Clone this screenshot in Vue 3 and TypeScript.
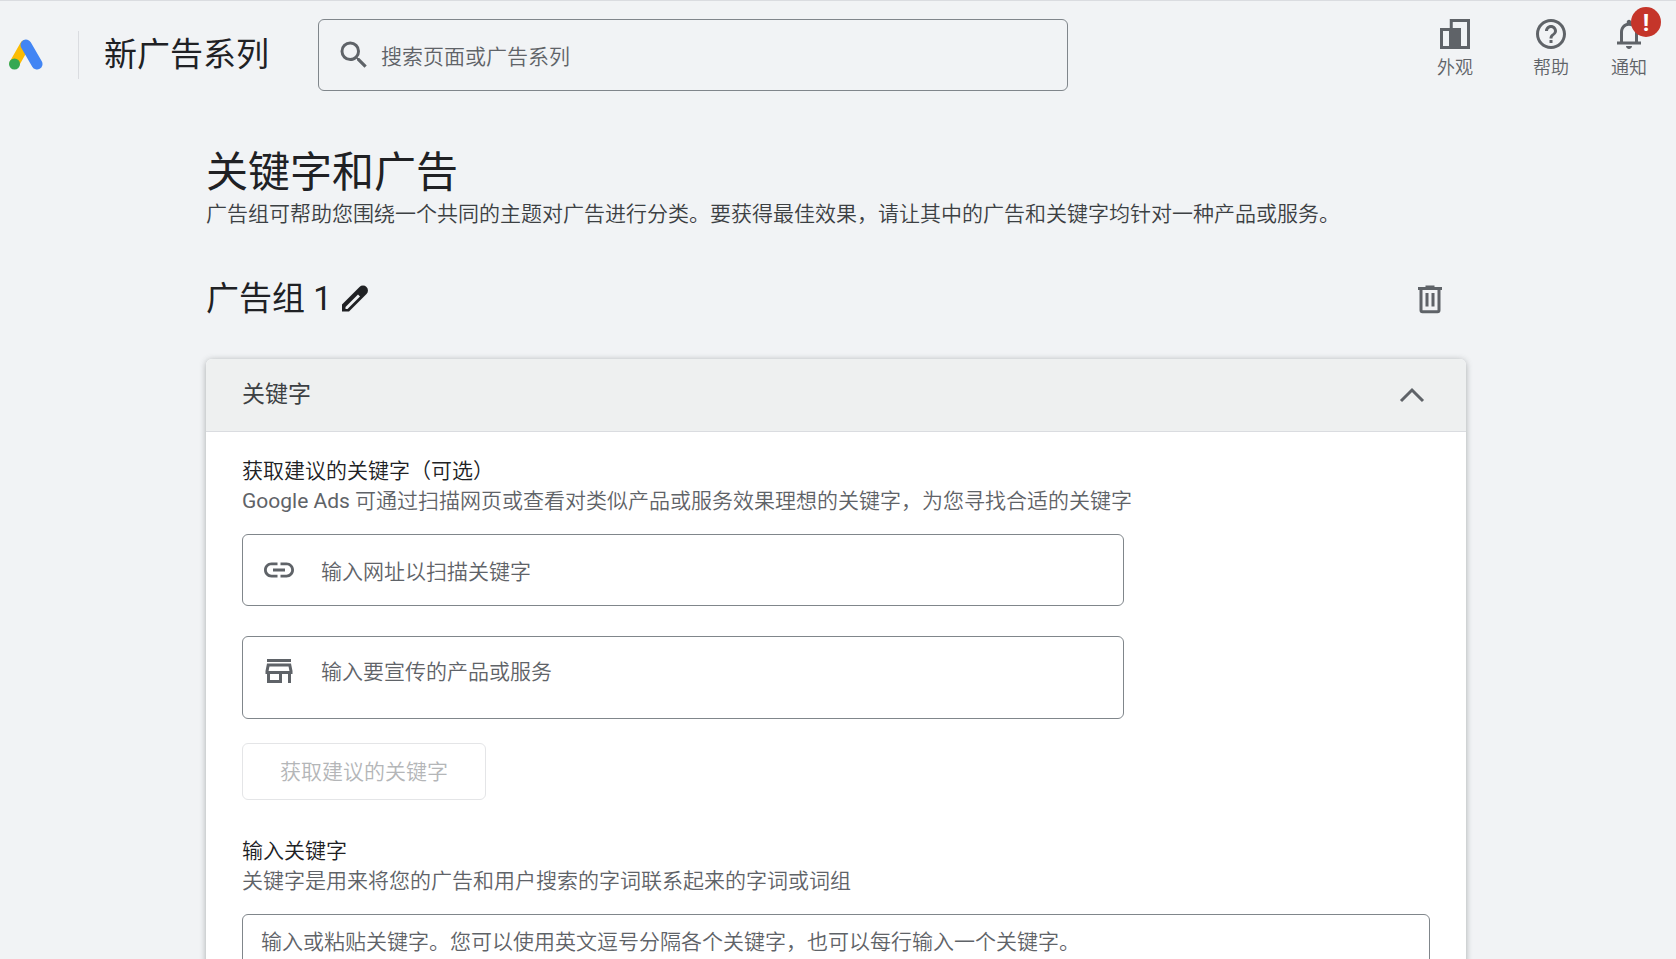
<script setup lang="ts">
import { ref } from 'vue'

const query = ref('')
const siteUrl = ref('')
const product = ref('')
const keywords = ref('')
</script>

<template>
  <div class="page">
    <header class="topbar">
      <a class="logo" href="#" aria-label="Google Ads">
        <svg viewBox="0 0 36 32" width="36" height="32" aria-hidden="true">
          <path d="M17 6 6.500 24.500" stroke="#fbbc04" stroke-width="10" stroke-linecap="round" />
          <path d="M18 6 29 25" stroke="#4285f4" stroke-width="11" stroke-linecap="round" />
          <circle cx="6.500" cy="25" r="5.500" fill="#34a853" />
        </svg>
      </a>
      <div class="product-name">新广告系列</div>
      <label class="search">
        <svg class="icon" viewBox="0 0 24 24" aria-hidden="true">
          <path d="M15.5 14h-.79l-.28-.27A6.47 6.47 0 0 0 16 9.5 6.5 6.5 0 1 0 9.5 16c1.61 0 3.09-.59 4.23-1.57l.27.28v.79l5 4.99L20.49 19l-4.99-5zm-6 0C7.01 14 5 11.99 5 9.5S7.01 5 9.5 5 14 7.01 14 9.5 11.99 14 9.5 14z" />
        </svg>
        <input v-model="query" type="text" placeholder="搜索页面或广告系列" aria-label="搜索页面或广告系列" />
      </label>
      <nav class="tools">
        <button type="button" class="tool appearance">
          <svg class="icon" viewBox="0 0 24 24" aria-hidden="true">
            <path fill-rule="evenodd" d="M8.500 2H22v20H2V8h6.500zM10.500 4v4H16v12h4V4zM4 10v10h4V10z" />
          </svg>
          <span>外观</span>
        </button>
        <button type="button" class="tool">
          <svg class="icon" viewBox="0 0 24 24" aria-hidden="true">
            <path d="M11 18h2v-2h-2v2zm1-16C6.480 2 2 6.480 2 12s4.480 10 10 10 10-4.480 10-10S17.520 2 12 2zm0 18c-4.410 0-8-3.590-8-8s3.590-8 8-8 8 3.590 8 8-3.590 8-8 8zm0-14c-2.210 0-4 1.790-4 4h2c0-1.100.9-2 2-2s2 .9 2 2c0 2-3 1.750-3 5h2c0-2.250 3-2.500 3-5 0-2.210-1.790-4-4-4z" />
          </svg>
          <span>帮助</span>
        </button>
        <button type="button" class="tool">
          <svg class="icon" viewBox="0 0 24 24" aria-hidden="true">
            <path d="M12 22c1.100 0 2-.9 2-2h-4c0 1.100.9 2 2 2zm6-5v-6c0-3.070-1.630-5.640-4.500-6.320V4c0-.83-.67-1.500-1.500-1.500s-1.500.67-1.500 1.500v.68C7.640 5.360 6 7.920 6 11v6H4v2h16v-2h-2zm-2 0H8v-6c0-2.480 1.510-4.500 4-4.500s4 2.020 4 4.500v6z" />
          </svg>
          <span>通知</span>
          <b class="badge">!</b>
        </button>
      </nav>
    </header>

    <main class="content">
      <div class="column">
        <h1>关键字和广告</h1>
        <p class="intro">广告组可帮助您围绕一个共同的主题对广告进行分类。要获得最佳效果，请让其中的广告和关键字均针对一种产品或服务。</p>

        <div class="group">
          <h2>广告组 1</h2>
          <button type="button" class="plain dark" aria-label="修改广告组名称">
            <svg class="icon" viewBox="0 0 36 36" aria-hidden="true">
              <path d="M6 23.500 23.500 6a4.800 4.800 0 0 1 7 7L13 30.500H6z" />
              <path d="M9.500 26 22 13.500l2 2L11.500 28h-2z" fill="#f1f3f5" />
            </svg>
          </button>
          <button type="button" class="plain remove" aria-label="移除广告组">
            <svg class="icon" viewBox="0 0 24 24" aria-hidden="true">
              <path fill-rule="evenodd" d="M9 3h6v1h5v2h-1v13.500a2 2 0 0 1-2 2H7a2 2 0 0 1-2-2V6H4V4h5zM7 6v13.500h10V6zM9 8h2v9H9zM13 8h2v9h-2z" />
            </svg>
          </button>
        </div>

        <section class="card">
          <div class="card-head">
            <h3>关键字</h3>
            <button type="button" class="plain" aria-label="收起">
              <svg class="icon" viewBox="0 0 36 36" aria-hidden="true">
                <path d="M7 24 18 13l11 11" fill="none" stroke="currentColor" stroke-width="3" />
              </svg>
            </button>
          </div>
          <div class="card-body">
            <h4>获取建议的关键字（可选）</h4>
            <p><span class="brand">Google Ads</span> 可通过扫描网页或查看对类似产品或服务效果理想的关键字，为您寻找合适的关键字</p>
            <label class="field">
              <svg class="icon" viewBox="0 0 24 24" aria-hidden="true">
                <path d="M3.900 12c0-1.710 1.390-3.100 3.100-3.100h4V7H7c-2.760 0-5 2.240-5 5s2.240 5 5 5h4v-1.900H7c-1.710 0-3.100-1.390-3.100-3.100zM8 13h8v-2H8v2zm9-6h-4v1.900h4c1.710 0 3.100 1.390 3.100 3.100s-1.390 3.100-3.100 3.100h-4V17h4c2.760 0 5-2.240 5-5s-2.240-5-5-5z" />
              </svg>
              <input v-model="siteUrl" type="text" placeholder="输入网址以扫描关键字" aria-label="输入网址以扫描关键字" />
            </label>
            <label class="field tall">
              <svg class="icon" viewBox="0 0 24 24" aria-hidden="true">
                <path d="M18.360 9l.6 3H5.040l.6-3h12.720M20 4H4v2h16V4zm0 3H4l-1 5v2h1v6h10v-6h4v6h2v-6h1v-2l-1-5zM6 18v-4h6v4H6z" />
              </svg>
              <input v-model="product" type="text" placeholder="输入要宣传的产品或服务" aria-label="输入要宣传的产品或服务" />
            </label>
            <button type="button" class="suggest" disabled>获取建议的关键字</button>

            <h4><label for="keywords">输入关键字</label></h4>
            <p>关键字是用来将您的广告和用户搜索的字词联系起来的字词或词组</p>
            <textarea id="keywords" v-model="keywords" rows="8" placeholder="输入或粘贴关键字。您可以使用英文逗号分隔各个关键字，也可以每行输入一个关键字。"></textarea>
          </div>
        </section>
      </div>
    </main>
  </div>
</template>

<style>
body {
  margin: 0;
  background: #f1f3f5;
}
</style>

<style scoped>
.page {
  display: flex;
  flex-direction: column;
  height: 100vh;
  box-sizing: border-box;
  overflow: hidden;
  border-top: 1px solid #dadce0;
  background: #f1f3f5;
  color: #202124;
  font: 350 21px/30px Roboto, "Noto Sans CJK SC", sans-serif;
}

h1, h2, h3, h4, p {
  margin: 0;
  font-weight: inherit;
}

button, input, textarea {
  font: inherit;
  color: inherit;
}

.icon {
  display: block;
  flex: none;
  width: 36px;
  height: 36px;
  fill: currentColor;
}

.topbar {
  display: flex;
  flex: none;
  align-items: center;
  height: 108px;
  padding: 0 29px 0 8px;
}

.logo {
  display: flex;
  align-items: center;
  height: 48px;
  padding-right: 34px;
  border-right: 1px solid #dadce0;
}

.logo path {
  fill: none;
}

.product-name {
  width: 214px;
  padding-left: 25px;
  font-size: 33px;
  font-weight: 400;
  line-height: 50px;
  white-space: nowrap;
}

.search {
  display: flex;
  align-items: center;
  gap: 9px;
  box-sizing: border-box;
  flex: 0 1 750px;
  height: 72px;
  padding: 0 17px;
  border: 1px solid #80868b;
  border-radius: 6px;
  color: #5f6368;
}

input {
  flex: 1;
  min-width: 0;
  padding: 4px 0 0;
  border: 0;
  outline: 0;
  background: none;
}

::placeholder {
  color: #5f6368;
  opacity: 1;
}

.tools {
  display: flex;
  gap: 42px;
  margin-left: auto;
  padding-bottom: 10px;
}

.tool {
  position: relative;
  display: flex;
  flex-direction: column;
  align-items: center;
  padding: 0;
  border: 0;
  background: none;
  color: #5f6368;
  font-size: 18px;
  line-height: 32px;
}

.appearance {
  margin-right: 18px;
}

.badge {
  position: absolute;
  top: -9px;
  right: -14px;
  width: 30px;
  height: 30px;
  border-radius: 50%;
  background: #c5352a;
  color: #fff;
  font-size: 24px;
  font-weight: 700;
}

.content {
  flex: 1;
  min-height: 0;
  padding: 38px 4px 0 0;
  overflow: auto;
  scrollbar-width: none;
}

.column {
  max-width: 1260px;
  margin: 0 auto;
}

h1 {
  font-size: 42px;
  font-weight: 400;
  line-height: 52px;
}

.intro {
  color: #3c4043;
}

.group {
  display: flex;
  align-items: center;
  gap: 4px;
  height: 48px;
  margin: 46px 0 36px;
}

h2 {
  font-size: 33px;
  font-weight: 400;
  line-height: 50px;
}

.plain {
  padding: 0;
  border: 0;
  background: none;
  color: #5f6368;
}

.dark {
  color: #202124;
}

.remove {
  margin: 0 18px 0 auto;
}

.card {
  border-radius: 6px;
  background: #fff;
  box-shadow: 0 1px 6px rgba(60, 64, 67, 0.4);
}

.card-head {
  display: flex;
  align-items: center;
  justify-content: space-between;
  height: 72px;
  padding: 0 36px;
  border-bottom: 1px solid #dadce0;
  border-radius: 6px 6px 0 0;
  background: #eef0f0;
}

h3 {
  color: #3c4043;
  font-size: 23px;
  font-weight: 400;
}

.card-body {
  padding: 24px 36px;
}

.card-body p {
  color: #5f6368;
}

.brand {
  font-weight: 400;
}

.field {
  display: flex;
  align-items: center;
  gap: 24px;
  box-sizing: border-box;
  max-width: 882px;
  height: 72px;
  margin: 18px 0 30px;
  padding: 0 18px;
  border: 1px solid #80868b;
  border-radius: 6px;
  color: #5f6368;
}

.tall {
  align-items: flex-start;
  height: 83px;
  margin-bottom: 24px;
  padding-top: 16px;
}

.suggest {
  display: block;
  height: 57px;
  margin-bottom: 36px;
  padding: 0 37px;
  border: 1px solid #e4e5e7;
  border-radius: 6px;
  background: none;
  color: #b4b6b8;
}

textarea {
  display: block;
  box-sizing: border-box;
  width: 100%;
  margin-top: 18px;
  padding: 12px 18px;
  border: 1px solid #80868b;
  border-radius: 6px;
  outline: 0;
  background: none;
  resize: none;
}
</style>
